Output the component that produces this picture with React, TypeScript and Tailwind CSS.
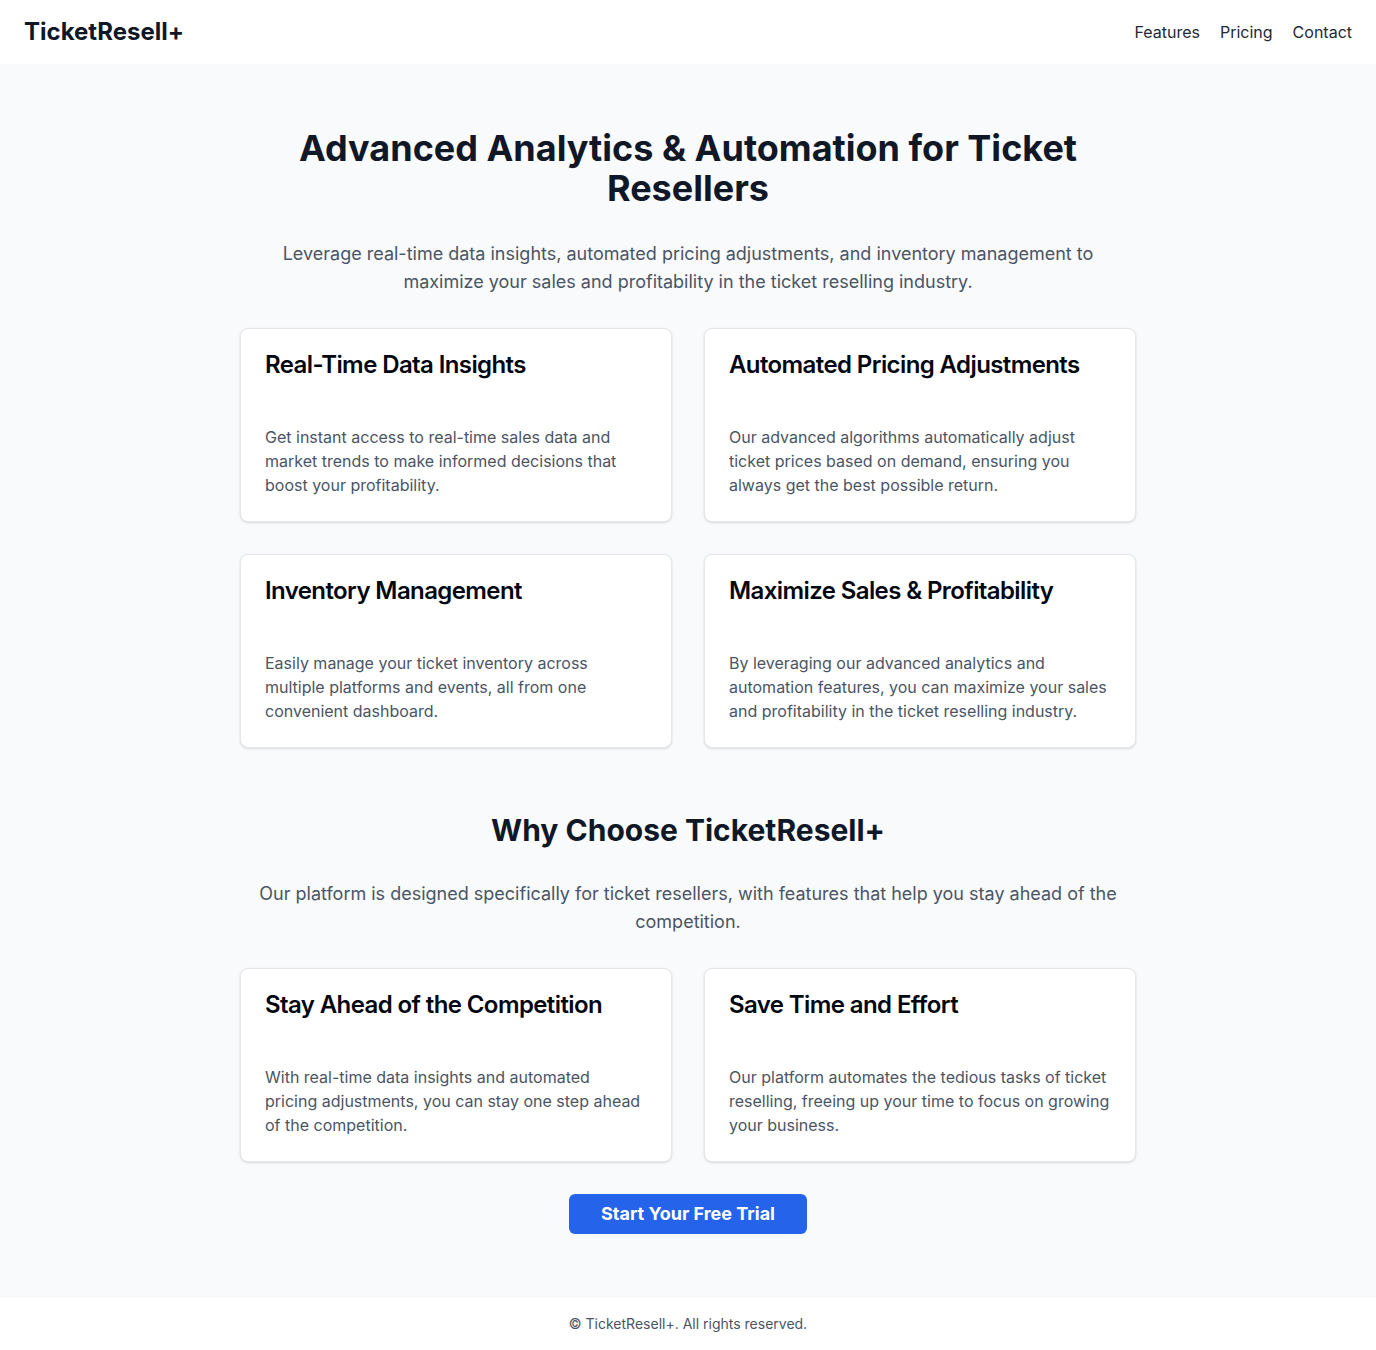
const features = [
  {
    title: 'Real-Time Data Insights',
    body: 'Get instant access to real-time sales data and market trends to make informed decisions that boost your profitability.',
  },
  {
    title: 'Automated Pricing Adjustments',
    body: 'Our advanced algorithms automatically adjust ticket prices based on demand, ensuring you always get the best possible return.',
  },
  {
    title: 'Inventory Management',
    body: 'Easily manage your ticket inventory across multiple platforms and events, all from one convenient dashboard.',
  },
  {
    title: 'Maximize Sales & Profitability',
    body: 'By leveraging our advanced analytics and automation features, you can maximize your sales and profitability in the ticket reselling industry.',
  },
]

const reasons = [
  {
    title: 'Stay Ahead of the Competition',
    body: 'With real-time data insights and automated pricing adjustments, you can stay one step ahead of the competition.',
    tight: true,
  },
  {
    title: 'Save Time and Effort',
    body: 'Our platform automates the tedious tasks of ticket reselling, freeing up your time to focus on growing your business.',
  },
]

function Card({ title, body, tight }: { title: string; body: string; tight?: boolean }) {
  return (
    <div className="rounded-lg border border-gray-200 bg-white shadow-sm">
      <div className="p-6">
        <h3 className="text-2xl font-semibold leading-none tracking-tight text-gray-950">{title}</h3>
      </div>
      <div className={tight ? 'pl-6 pr-[26px] pb-6 mt-6' : 'px-6 pb-6 mt-6'}>
        <p className="text-base text-gray-600">{body}</p>
      </div>
    </div>
  )
}

export default function App() {
  return (
    <div className="min-h-screen flex flex-col bg-white font-['Inter',sans-serif]">
      <header className="h-16 px-6 flex items-center justify-between bg-white">
        <span className="text-2xl font-bold text-gray-900">TicketResell+</span>
        <nav className="flex gap-5 text-base text-gray-800">
          <a href="#">Features</a>
          <a href="#">Pricing</a>
          <a href="#">Contact</a>
        </nav>
      </header>

      <main className="flex-1 bg-gray-50 py-16">
        <div className="max-w-4xl mx-auto text-center">
          <h1 className="text-4xl font-bold text-gray-900 mb-8">
            Advanced Analytics &amp; Automation for Ticket Resellers
          </h1>
          <p className="text-lg text-gray-600 mb-8">
            Leverage real-time data insights, automated pricing adjustments, and inventory management to
            maximize your sales and profitability in the ticket reselling industry.
          </p>
          <div className="grid grid-cols-2 gap-8 text-left">
            {features.map((f) => (
              <Card key={f.title} {...f} />
            ))}
          </div>

          <h2 className="text-3xl font-bold text-gray-900 mt-16 mb-8">Why Choose TicketResell+</h2>
          <p className="text-lg text-gray-600 mb-8">
            Our platform is designed specifically for ticket resellers, with features that help you stay ahead of the
            competition.
          </p>
          <div className="grid grid-cols-2 gap-8 text-left">
            {reasons.map((r) => (
              <Card key={r.title} {...r} />
            ))}
          </div>

          <button className="mt-8 h-10 px-8 rounded-md bg-[#2563eb] text-white text-lg font-bold">
            Start Your Free Trial
          </button>
        </div>
      </main>

      <footer className="py-4 bg-white text-center text-sm text-gray-600">
        © TicketResell+. All rights reserved.
      </footer>
    </div>
  )
}
